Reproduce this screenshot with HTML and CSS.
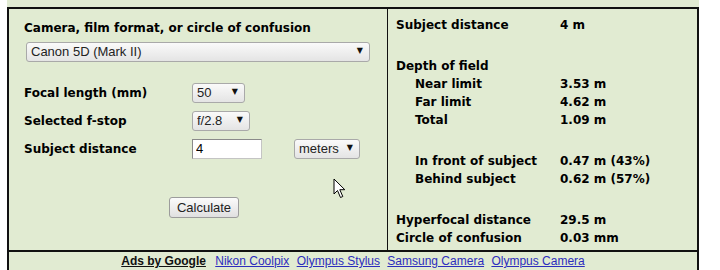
FILE: index.html
```html
<!DOCTYPE html>
<html lang="en">
<head>
    <meta charset="UTF-8">
    <title>Depth of Field Calculator</title>
    <link rel="stylesheet" href="styles.css">
</head>
<body>
    <div class="page">
        <div class="top-strip"></div>
        <div class="calc">
            <div class="calc-main">
                <div class="inputs">
                    <div class="label">Camera, film format, or circle of confusion</div>
                    <span class="dropdown camera-select">
                        <select><option>Canon 5D (Mark II)</option></select>
                    </span>

                    <div class="form-rows">
                        <div class="label">Focal length (mm)</div>
                        <div><span class="dropdown focal-select"><select><option>50</option></select></span></div>

                        <div class="label">Selected f-stop</div>
                        <div><span class="dropdown fstop-select"><select><option>f/2.8</option></select></span></div>

                        <div class="label">Subject distance</div>
                        <div class="distance">
                            <input type="text" value="4">
                            <span class="dropdown unit-select"><select><option>meters</option></select></span>
                        </div>
                    </div>

                    <div class="actions">
                        <button type="button">Calculate</button>
                    </div>

                    <!-- mouse pointer from the screenshot -->
                    <svg class="pointer" width="13" height="21" viewBox="0 0 13 21">
                        <path d="M1 1 L1 16 L4.5 12.5 L7.5 19.5 L9.8 18.5 L6.8 11.7 L11.8 11.7 Z" fill="#fff" stroke="#000" stroke-width="1" stroke-linejoin="round"/>
                    </svg>
                </div>

                <div class="results">
                    <div class="res-row"><span>Subject distance</span><span>4 m</span></div>

                    <div class="res-row group"><span>Depth of field</span><span></span></div>
                    <div class="res-row sub"><span>Near limit</span><span>3.53 m</span></div>
                    <div class="res-row sub"><span>Far limit</span><span>4.62 m</span></div>
                    <div class="res-row sub"><span>Total</span><span>1.09 m</span></div>

                    <div class="res-row sub group"><span>In front of subject</span><span>0.47 m (43%)</span></div>
                    <div class="res-row sub"><span>Behind subject</span><span>0.62 m (57%)</span></div>

                    <div class="res-row group"><span>Hyperfocal distance</span><span>29.5 m</span></div>
                    <div class="res-row"><span>Circle of confusion</span><span>0.03 mm</span></div>
                </div>
            </div>

            <div class="ads">
                <a class="ads-by" href="#">Ads by Google</a>
                <a href="#">Nikon Coolpix</a>
                <a href="#">Olympus Stylus</a>
                <a href="#">Samsung Camera</a>
                <a href="#">Olympus Camera</a>
            </div>
        </div>
    </div>
</body>
</html>
```

FILE: styles.css
```css
body {
    margin: 0;
    background: #fff;
    font-family: "DejaVu Sans", Verdana, sans-serif;
    color: #000;
}
.page {
    margin-left: 7px;
    width: 692px;
}
.top-strip {
    height: 7px;
    background: #e1ebd2;
}
.calc {
    background: #e1ebd2;
    border: 2px solid #111;
    border-bottom: none;
}
.calc-main {
    display: grid;
    grid-template-columns: 379px 1fr;
    height: 241px;
}
.inputs {
    position: relative;
    border-right: 1px solid #111;
    padding: 11px 0 0 15px;
}
.label {
    font-weight: bold;
    font-size: 12px;
    line-height: 16px;
}
.dropdown {
    position: relative;
    display: inline-block;
}
.dropdown select {
    appearance: none;
    -webkit-appearance: none;
    font-family: "Liberation Sans", Arial, sans-serif;
    font-size: 13px;
    color: #222;
    height: 20px;
    padding: 0 0 0 4px;
    border: 1px solid #a9a9a9;
    border-radius: 3px;
    background: linear-gradient(#fafafa, #e4e4e4);
}
.dropdown::after {
    content: "\25BC";
    position: absolute;
    right: 7px;
    top: 5px;
    font-size: 8px;
    color: #111;
    pointer-events: none;
}
.camera-select {
    margin: 5px 0 0 2px;
}
.camera-select select {
    width: 344px;
}
.focal-select select {
    width: 53px;
}
.fstop-select select {
    width: 58px;
}
.unit-select select {
    width: 66px;
}
.form-rows {
    display: grid;
    grid-template-columns: 168px 1fr;
    grid-auto-rows: 20px;
    row-gap: 8px;
    align-items: center;
    margin-top: 21px;
}
.distance {
    display: flex;
    align-items: center;
    gap: 32px;
}
.distance input {
    width: 65px;
    height: 18px;
    padding: 0 0 0 3px;
    font-family: "Liberation Sans", Arial, sans-serif;
    font-size: 13px;
    border: 1px solid #c4c4c4;
    border-top-color: #8a8a8a;
    border-left-color: #8a8a8a;
    background: #fff;
    margin: 0;
}
.actions {
    margin: 38px 0 0 145px;
}
.actions button {
    font-family: "Liberation Sans", Arial, sans-serif;
    font-size: 13px;
    color: #222;
    height: 21px;
    width: 70px;
    padding: 0;
    border: 1px solid #9c9c9c;
    border-radius: 3px;
    background: linear-gradient(#fbfbfb, #e0e0e0);
}
.pointer {
    position: absolute;
    left: 324px;
    top: 169px;
}
.results {
    padding: 7px 0 0 8px;
    font-weight: bold;
    font-size: 12px;
}
.res-row {
    display: grid;
    grid-template-columns: 164px 1fr;
    line-height: 18px;
}
.res-row.sub span:first-child {
    padding-left: 19px;
}
.res-row.group {
    margin-top: 23px;
}
.ads {
    border-top: 2px solid #111;
    text-align: center;
    font-family: "Liberation Sans", Arial, sans-serif;
    font-size: 12px;
    line-height: 19px;
    height: 20px;
}
.ads a {
    color: #2d2dbd;
    margin: 0 2px;
}
.ads .ads-by {
    color: #111;
    font-weight: bold;
    margin-right: 4px;
}
```
